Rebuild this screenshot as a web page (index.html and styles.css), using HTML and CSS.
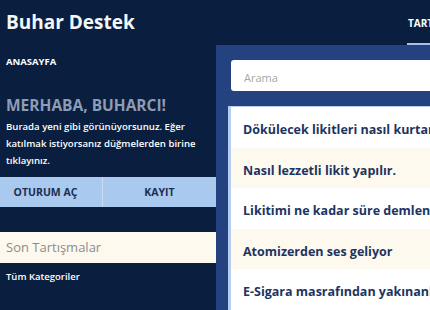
FILE: index.html
```html
<!DOCTYPE html>
<html lang="tr">
<head>
<meta charset="utf-8">
<link rel="stylesheet" href="styles.css">
</head>
<body>
<div class="page">
  <aside class="side">
    <h1 class="brand">Buhar Destek</h1>
    <nav class="side-nav"><a class="nav-link">ANASAYFA</a></nav>
    <section class="welcome">
      <h2 class="welcome-title">MERHABA, BUHARCI!</h2>
      <p class="welcome-text">Burada yeni gibi görünüyorsunuz. Eğer katılmak istiyorsanız düğmelerden birine tıklayınız.</p>
    </section>
    <div class="auth">
      <button class="auth-btn login">OTURUM AÇ</button>
      <button class="auth-btn">KAYIT</button>
    </div>
    <div class="recent">Son Tartışmalar</div>
    <div class="cats">Tüm Kategoriler</div>
  </aside>
  <main class="main">
    <div class="tabs"><span class="tab active">TARTIŞMALAR</span></div>
    <div class="panel">
      <input class="search" type="text" placeholder="Arama">
      <ul class="list">
        <li class="item">Dökülecek likitleri nasıl kurtarırım?</li>
        <li class="item alt">Nasıl lezzetli likit yapılır.</li>
        <li class="item">Likitimi ne kadar süre demlendirmeliyim?</li>
        <li class="item alt">Atomizerden ses geliyor</li>
        <li class="item">E-Sigara masrafından yakınanlar</li>
      </ul>
    </div>
  </main>
</div>
</body>
</html>
```

FILE: styles.css
```css
* { box-sizing: border-box; }
html, body { margin: 0; padding: 0; }
body {
  background: #0a1f3f;
  font-family: "Open Sans", "DejaVu Sans", sans-serif;
  color: #fff;
  width: 430px;
  height: 310px;
  overflow: hidden;
}
.page {
  display: grid;
  grid-template-columns: 216px 214px;
  height: 310px;
}
.side { display: flex; flex-direction: column; }
.brand {
  margin: 0;
  padding: 8px 6px 0;
  font-size: 19px;
  font-weight: 700;
  line-height: 28px;
  color: #f4f6fa;
}
.side-nav { padding: 20px 6px 0; }
.nav-link {
  font-size: 9.5px;
  font-weight: 700;
  color: #fff;
  line-height: 12px;
  display: block;
}
.welcome { padding: 27px 6px 0; }
.welcome-title {
  margin: 0;
  font-size: 15.5px;
  font-weight: 700;
  line-height: 20px;
  color: #8e9cb6;
}
.welcome-text {
  margin: 3px 0 0;
  font-size: 9.6px;
  font-weight: 600;
  line-height: 17px;
  color: #fff;
  padding-right: 8px;
}
.auth {
  margin-top: 8px;
  display: grid;
  grid-template-columns: 102px 1fr;
  background: #a9c9ef;
  height: 30px;
}
.auth-btn {
  border: 0;
  background: transparent;
  font-family: inherit;
  font-size: 10.5px;
  font-weight: 700;
  color: #1c2f52;
  padding: 0;
}
.auth-btn.login { padding-right: 11px; }
.auth-btn + .auth-btn { border-left: 1px solid #c9dcf4; }
.recent {
  margin-top: 25px;
  height: 31px;
  background: #fdf9ee;
  color: #8c8c8c;
  font-size: 13px;
  line-height: 31px;
  padding-left: 6px;
  font-weight: 400;
}
.cats {
  padding: 7px 6px 0;
  font-size: 9.5px;
  font-weight: 600;
  line-height: 14px;
  color: #fff;
}
.main { display: flex; flex-direction: column; min-width: 0; overflow: hidden; }
.tabs {
  height: 45px;
  display: flex;
  justify-content: flex-start;
  align-items: stretch;
  overflow: hidden;
  padding-left: 191px;
}
.tab {
  font-size: 10px;
  font-weight: 700;
  color: #fff;
  white-space: nowrap;
  padding-top: 16px;
  padding-left: 1px;
  border-bottom: 2px solid #a9c0e8;
}
.panel {
  flex: 1;
  background: #24427f;
  padding: 15px 0 0 15px;
  display: flex;
  flex-direction: column;
  overflow: hidden;
}
.search {
  height: 33px;
  border: 0;
  border-radius: 3px 0 0 3px;
  background: #fff;
  font-family: inherit;
  font-size: 11px;
  color: #999;
  padding: 3px 0 0 13px;
  outline: none;
  width: 100%;
}
.search::placeholder { color: #a6a6a6; }
.list {
  list-style: none;
  margin: 15px 0 0 -3px;
  padding: 0;
  background: #fff;
  border-left: 3px solid #b6cdef;
  border-top: 1px solid #b6cdef;
}
.item {
  height: 40.6px;
  line-height: 40px;
  padding: 3px 0 0 12px;
  font-size: 12.5px;
  font-weight: 700;
  color: #1d3461;
  white-space: nowrap;
  overflow: hidden;
}
.item.alt { background: #fdf9ee; }
```
